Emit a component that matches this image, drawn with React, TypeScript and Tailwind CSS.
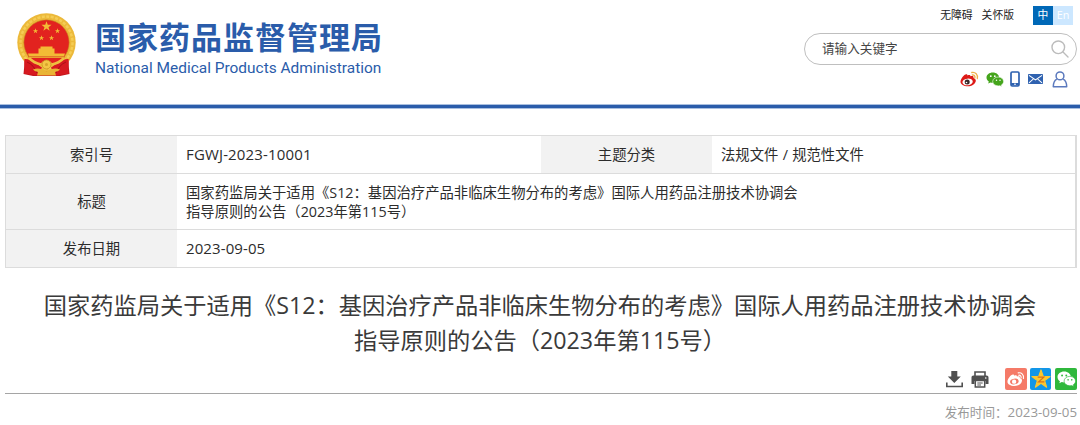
import type { ReactNode } from 'react';

const FONT = "font-['Open_Sans','Noto_Sans_CJK_SC',sans-serif]";

const STAR = 'M0-10 2.4-3.1 9.5-3.1 3.8 1.2 5.9 8.1 0 4 -5.9 8.1 -3.8 1.2 -9.5-3.1 -2.4-3.1z';

function Emblem() {
  return (
    <svg width="60" height="64" viewBox="0 0 60 64">
      <path d="M8 46 6.500 61 16 63H43l9.500-2L51 46z" fill="#c4161c" />
      <circle cx="29.500" cy="29.500" r="29.200" fill="#ecb93a" />
      <circle cx="29.500" cy="29.500" r="26" fill="none" stroke="#f5cd55" strokeWidth="2.500" strokeDasharray="3 1.500" />
      <circle cx="29.500" cy="29.500" r="22.700" fill="#e2231f" stroke="#c98f20" strokeWidth=".6" />
      <g fill="#f3bb35">
        <path d={STAR} transform="translate(29.500 13.500) scale(.53)" />
        <path d={STAR} transform="translate(18.500 18) scale(.28)" />
        <path d={STAR} transform="translate(40.500 18) scale(.28)" />
        <path d={STAR} transform="translate(24.500 25) scale(.28)" />
        <path d={STAR} transform="translate(34.500 25) scale(.28)" />
        <path d="M23.500 33.500h12v2h-12zM21.500 35.500h16v2.500h-16zM21.500 38h16v2.500H48L46.500 45h-34L11 40.500h10.500z" />
      </g>
      <path d="M11 43.800h37" stroke="#cf4a20" strokeWidth=".8" />
      <path d="M7.500 46c7-.5 12 5 17.500 8.500L21 62.500 7 60.500C9 56 6.500 52 7.500 46zM51.500 46c-7-.5-12 5-17.500 8.500L38 62.500l14-2C50 56 52.500 52 51.500 46z" fill="#d71920" />
      <path d="M10 49c5 2 8 6 10 11M49 49c-5 2-8 6-10 11" fill="none" stroke="#a90f17" />
      <path d="M12 45c3 3 7 5.500 12 6.500 3-3.500 8-3.500 11 0 5-1 9-3.500 12-6.500" fill="none" stroke="#efbf40" strokeWidth="2.500" />
      <circle cx="29.500" cy="51.500" r="4.500" fill="#f3c645" stroke="#c8921f" strokeWidth=".8" />
      <circle cx="29.500" cy="51.500" r="1.500" fill="#d8a32b" />
      <path d="M16 56.500c5-2 9-.5 13.500 2 4.500-2.500 8.500-4 13.500-2-1.500 1.500-3 2-5 2.500l1 3.500H20l1-3.500c-2-.5-3.500-1-5-2.500z" fill="#e9b435" />
    </svg>
  );
}

function WeiboColor() {
  return (
    <svg width="19" height="17" viewBox="0 0 19 17">
      <path d="M7.500 4.500c1.500-.8 3-.6 3 .8 1.800-.6 3.500-.3 3 1.700 1.600.5 2.500 1.500 2.300 3-.4 3-4 5.300-8 5.300S.5 13.500.5 10.800c0-2.600 3.500-7.500 5.800-7.500 1 0 1.300.6 1.200 1.200z" fill="#dd1a17" />
      <ellipse cx="7.600" cy="10.900" rx="5.200" ry="3.300" fill="#fff" transform="rotate(-8 7.600 10.900)" />
      <circle cx="7.200" cy="11" r="2.500" fill="#3a2527" />
      <circle cx="6.500" cy="11.500" r=".8" fill="#fff" />
      <path d="M11.800 1.500c3.500-.7 6.400 2 5.500 6M12.300 4c1.600-.3 3 .9 2.600 2.800" fill="none" stroke="#f0b04a" strokeWidth="1.300" strokeLinecap="round" />
    </svg>
  );
}

function Wechat({ className, body, eye }: { className: string; body: string; eye: string }) {
  return (
    <svg className={className} viewBox="0 0 18 15">
      <path d="M6.800.5C3.200.5.500 2.800.500 5.600c0 1.700.9 3.100 2.300 4L2.200 11.500l2.300-1.100c.8.200 1.500.300 2.300.300 3.500 0 6.300-2.300 6.300-5.100S10.300.5 6.800.5z" fill={body} />
      <path d="M12.200 5c-3 0-5.500 2-5.500 4.500s2.500 4.400 5.500 4.400c.6 0 1.200-.1 1.700-.2l2 1-.5-1.700c1.300-.8 2.200-2.100 2.200-3.500C17.600 7 15.200 5 12.200 5z" fill={body} stroke={eye} strokeWidth=".6" />
      <g fill={eye}>
        <circle cx="4.800" cy="4.200" r=".9" />
        <circle cx="8.800" cy="4.200" r=".9" />
        <circle cx="10.500" cy="8.300" r=".75" />
        <circle cx="14" cy="8.300" r=".75" />
      </g>
    </svg>
  );
}

function HeaderIcons() {
  return (
    <div className="mt-[5px] flex h-[18px] items-center pr-[9px]">
      <WeiboColor />
      <Wechat className="ml-[7px] h-[15px] w-[18px]" body="#45a51c" eye="#fff" />
      <svg className="ml-[6px]" width="10" height="16" viewBox="0 0 10 16">
        <rect x="1" y="1" width="8" height="14" rx="1.200" fill="#fff" stroke="#2f62b0" strokeWidth="1.700" />
        <path d="M1 12h8v2.500H1z" fill="#2f62b0" />
        <path d="M4 13.200h2" stroke="#fff" />
      </svg>
      <svg className="ml-2" width="15" height="10" viewBox="0 0 15 11" preserveAspectRatio="none">
        <rect width="15" height="11" rx=".8" fill="#2f62b0" />
        <path d="M1 1.500 7.500 6.500 14 1.500M1 9.800 5.300 5.500M14 9.800 9.700 5.500" fill="none" stroke="#fff" strokeWidth="1.100" />
      </svg>
      <svg className="ml-[9px]" width="16" height="17" viewBox="0 0 16 17">
        <circle cx="8" cy="4.900" r="3.900" fill="none" stroke="#5b79bd" strokeWidth="1.500" />
        <path d="M4.800 8.200C2.500 9.500 1.300 11.500 1.300 15.800h13.400c0-4.300-1.200-6.300-3.500-7.600" fill="none" stroke="#5b79bd" strokeWidth="1.500" strokeLinejoin="round" />
      </svg>
    </div>
  );
}

function Header() {
  return (
    <header className="h-[109px] border-b border-[#a9bfdf]">
      <div className="h-[105px] border-b border-[#a9bfdf]">
        <div className="flex h-[104px] justify-between">
          <div className="flex pl-[17px] pt-[13px]">
            <Emblem />
            <div className="ml-[18px] flex flex-col whitespace-nowrap text-[#2a5caa]">
              <div className="mt-[2px] font-['Noto_Sans_CJK_SC',sans-serif] text-[31px] font-bold leading-[41px] tracking-[1px]">国家药品监督管理局</div>
              <div className="mt-[2px] font-['Roboto',sans-serif] text-[15.450px] leading-5">National Medical Products Administration</div>
            </div>
          </div>
          <div className="flex w-[276px] flex-col items-end pr-[3px] pt-[6px]">
            <div className="flex h-[19px] items-center pr-1 text-[10.800px] text-[#222]">
              <span>无障碍</span>
              <span className="ml-[9px] mr-[19px]">关怀版</span>
              <span className="flex h-full w-5 items-center justify-center bg-[#0068b7] text-white">中</span>
              <span className="flex h-full w-5 items-center justify-center bg-[#cce7ff] text-white">En</span>
            </div>
            <div className="mt-2 flex h-8 w-[273px] shrink-0 items-center justify-between rounded-full border border-[#bfbfbf] pl-[17px] pr-[7px] text-[12.600px] text-[#444]">
              <span>请输入关键字</span>
              <svg width="18" height="18" viewBox="0 0 18 18" fill="none" stroke="#bcbcbc" strokeWidth="1.400">
                <circle cx="7.300" cy="7.300" r="6.300" />
                <path d="m12 12 5 5" strokeLinecap="round" />
              </svg>
            </div>
            <HeaderIcons />
          </div>
        </div>
      </div>
      <div className="h-[3px] bg-[#2a5caa]" />
    </header>
  );
}

function Label({ children }: { children: ReactNode }) {
  return <div className="flex items-center justify-center bg-[#f2f2f2]">{children}</div>;
}

function InfoTable() {
  return (
    <section className="ml-[5px] mt-[26px] w-[1072px] border border-r-2 border-[#dcdcdc] text-[14.330px] leading-[19px] text-[#2c2c2c]">
      <div className="grid h-[38px] grid-cols-[171px_364px_171px_1fr] border-b border-[#dcdcdc]">
        <Label>索引号</Label>
        <div className="flex items-center pl-[9px] text-[15px] tracking-[.15px]">FGWJ-2023-10001</div>
        <Label>主题分类</Label>
        <div className="flex items-center pl-[9px] [word-spacing:.6px]">法规文件 / 规范性文件</div>
      </div>
      <div className="grid h-[56px] grid-cols-[171px_1fr] border-b border-[#dcdcdc]">
        <Label>标题</Label>
        <div className="flex flex-col justify-center pl-[9px]">
          <p>国家药监局关于适用《S12：基因治疗产品非临床生物分布的考虑》国际人用药品注册技术协调会</p>
          <p>指导原则的公告（2023年第115号）</p>
        </div>
      </div>
      <div className="grid h-[37px] grid-cols-[171px_1fr]">
        <Label>发布日期</Label>
        <div className="flex items-center pl-[9px] text-[15px] tracking-[.1px]">2023-09-05</div>
      </div>
    </section>
  );
}

function ShareBar() {
  return (
    <div className="ml-[5px] mr-[3px] mt-[10px] flex h-[26px] items-start justify-end border-b border-[#a5a5a5]">
      <svg className="mt-[3px]" width="17" height="17" viewBox="0 0 17 17" fill="#505050">
        <path d="M5.300 0h6v5.500h3.500L8.300 12 1.800 5.500h3.500z" />
        <path d="M.8 11.500v4h15.400v-4" fill="none" stroke="#505050" strokeWidth="1.600" />
      </svg>
      <svg className="ml-2 mt-[3px]" width="18" height="17" viewBox="0 0 18 17" fill="#505050">
        <path d="M2.500 4.500h13c1.300 0 2 .8 2 2V13h-3v-3h-11v3h-3V6.500c0-1.200.7-2 2-2z" />
        <path d="M4 5V1h10v4" fill="none" stroke="#505050" strokeWidth="1.600" />
        <path d="M4.300 9.500V16h9.400V9.500z" fill="#fff" stroke="#505050" strokeWidth="1.500" />
        <path d="M6.300 12h5.400M6.300 14h3.700" stroke="#505050" strokeWidth="1" />
        <circle cx="14.800" cy="7" r=".8" fill="#fff" />
      </svg>
      <span className="ml-4 flex size-[22px] items-center justify-center rounded-[2px] bg-[#f57a68]">
        <svg width="18" height="17" viewBox="0 0 19 17">
          <path d="M7.500 4.500c1.500-.8 3-.6 3 .8 1.800-.6 3.500-.3 3 1.700 1.600.5 2.500 1.500 2.300 3-.4 3-4 5.300-8 5.300S.5 13.500.5 10.800c0-2.600 3.500-7.500 5.800-7.500 1 0 1.300.6 1.200 1.200z" fill="#fff" />
          <ellipse cx="7.800" cy="10.600" rx="4.600" ry="3" fill="#f57a68" transform="rotate(-8 7.800 10.600)" />
          <circle cx="7.500" cy="10.800" r="2.300" fill="#fff" />
          <path d="M11.800 1.500c3.500-.7 6.400 2 5.500 6M12.300 4c1.600-.3 3 .9 2.600 2.800" fill="none" stroke="#fff" strokeWidth="1.200" strokeLinecap="round" />
        </svg>
      </span>
      <span className="ml-[3px] flex h-[22px] w-[21px] items-center justify-center rounded-[2px] bg-[#1296e8]">
        <svg width="20" height="20" viewBox="-10.500 -10.500 21 20">
          <path d={STAR} fill="#fdc72f" stroke="#fdc72f" strokeWidth="1.200" strokeLinejoin="round" />
          <path d="M-3.500-2.500h6.500l-5.500 5h6" fill="none" stroke="#d9711c" strokeWidth="1.300" />
        </svg>
      </span>
      <span className="ml-1 flex size-[22px] items-center justify-center rounded-[2px] bg-[#2fb83c]">
        <Wechat className="h-[16px] w-[19px]" body="#fff" eye="#2fb83c" />
      </span>
    </div>
  );
}

export default function App() {
  return (
    <div className={`h-[425px] w-[1080px] overflow-hidden bg-white ${FONT}`}>
      <Header />
      <InfoTable />
      <h1 className="mt-[20px] whitespace-nowrap text-center text-[23.250px] leading-[35px] text-[#3a3a3a]">
        国家药监局关于适用《S12：基因治疗产品非临床生物分布的考虑》国际人用药品注册技术协调会
        <br />
        指导原则的公告（2023年第115号）
      </h1>
      <ShareBar />
      <div className="mr-[3px] mt-[8px] text-right text-[12.600px] leading-5 text-[#999]">
        发布时间：<span className="text-[13.300px]">2023-09-05</span>
      </div>
    </div>
  );
}
